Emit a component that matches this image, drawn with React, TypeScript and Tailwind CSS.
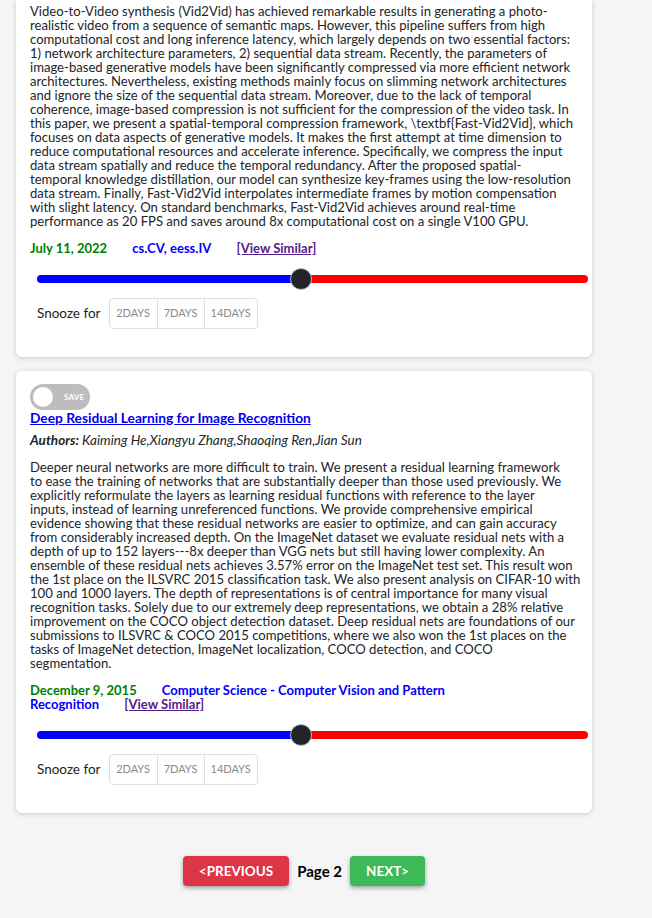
import React from 'react';

// abstracts kept line by line so they wrap the same way as the live page
const papers = [
  {
    id: 1,
    cutOff: true,
    title: '',
    authors: '',
    abstract: [
      'Video-to-Video synthesis (Vid2Vid) has achieved remarkable results in generating a photo-',
      'realistic video from a sequence of semantic maps. However, this pipeline suffers from high',
      'computational cost and long inference latency, which largely depends on two essential factors:',
      '1) network architecture parameters, 2) sequential data stream. Recently, the parameters of',
      'image-based generative models have been significantly compressed via more efficient network',
      'architectures. Nevertheless, existing methods mainly focus on slimming network architectures',
      'and ignore the size of the sequential data stream. Moreover, due to the lack of temporal',
      'coherence, image-based compression is not sufficient for the compression of the video task. In',
      'this paper, we present a spatial-temporal compression framework, \\textbf{Fast-Vid2Vid}, which',
      'focuses on data aspects of generative models. It makes the first attempt at time dimension to',
      'reduce computational resources and accelerate inference. Specifically, we compress the input',
      'data stream spatially and reduce the temporal redundancy. After the proposed spatial-',
      'temporal knowledge distillation, our model can synthesize key-frames using the low-resolution',
      'data stream. Finally, Fast-Vid2Vid interpolates intermediate frames by motion compensation',
      'with slight latency. On standard benchmarks, Fast-Vid2Vid achieves around real-time',
      'performance as 20 FPS and saves around 8x computational cost on a single V100 GPU.',
    ],
    date: 'July 11, 2022',
    category: 'cs.CV, eess.IV',
    score: 48,
  },
  {
    id: 2,
    cutOff: false,
    title: 'Deep Residual Learning for Image Recognition',
    authors: 'Kaiming He,Xiangyu Zhang,Shaoqing Ren,Jian Sun',
    abstract: [
      'Deeper neural networks are more difficult to train. We present a residual learning framework',
      'to ease the training of networks that are substantially deeper than those used previously. We',
      'explicitly reformulate the layers as learning residual functions with reference to the layer',
      'inputs, instead of learning unreferenced functions. We provide comprehensive empirical',
      'evidence showing that these residual networks are easier to optimize, and can gain accuracy',
      'from considerably increased depth. On the ImageNet dataset we evaluate residual nets with a',
      'depth of up to 152 layers---8x deeper than VGG nets but still having lower complexity. An',
      'ensemble of these residual nets achieves 3.57% error on the ImageNet test set. This result won',
      'the 1st place on the ILSVRC 2015 classification task. We also present analysis on CIFAR-10 with',
      '100 and 1000 layers. The depth of representations is of central importance for many visual',
      'recognition tasks. Solely due to our extremely deep representations, we obtain a 28% relative',
      'improvement on the COCO object detection dataset. Deep residual nets are foundations of our',
      'submissions to ILSVRC & COCO 2015 competitions, where we also won the 1st places on the',
      'tasks of ImageNet detection, ImageNet localization, COCO detection, and COCO',
      'segmentation.',
    ],
    date: 'December 9, 2015',
    category: 'Computer Science - Computer Vision and Pattern Recognition',
    score: 48,
  },
];

function SaveToggle() {
  return (
    <div className="flex items-center w-[60px] h-[26px] rounded-full bg-[#bdbdbd] px-[3px]">
      <div className="w-[20px] h-[20px] rounded-full bg-white" />
      <span className="ml-[11px] text-[8px] font-bold text-white tracking-wide">SAVE</span>
    </div>
  );
}

function Slider({ score }: { score: number }) {
  return (
    <div className="relative ml-[7px] w-[551px] h-[22px] flex items-center">
      <div className="flex w-full h-[8px] rounded-full overflow-hidden">
        <div className="h-full bg-[#0000ff]" style={{ width: `${score}%` }}></div>
        <div className="h-full flex-1 bg-[#ff0000]"></div>
      </div>
      <div
        className="absolute top-0 w-[22px] h-[22px] -ml-[11px] rounded-full bg-[#222428] border border-[#9fc4e0]"
        style={{ left: `${score}%` }}
      ></div>
    </div>
  );
}

function Snooze() {
  return (
    <div className="flex items-center ml-[7px] mt-2">
      <span className="text-[13.5px] text-[#212529] mr-2">Snooze for</span>
      <div className="flex h-[31px] border border-[#dedede] rounded text-[11px] text-[#8a8a8a]">
        <button className="px-[6px] w-[47px]">2DAYS</button>
        <button className="px-[6px] w-[47px] border-l border-[#dedede]">7DAYS</button>
        <button className="px-[6px] w-[53px] border-l border-[#dedede]">14DAYS</button>
      </div>
    </div>
  );
}

export default function App() {
  return (
    <div
      className="min-h-screen bg-[#f5f5f5] text-[#212529]"
      style={{ fontFamily: 'Lato, "Liberation Sans", sans-serif' }}
    >
      <div className="w-[576px] ml-4">
        {papers.map((paper) => (
          <div
            key={paper.id}
            className={`bg-white shadow-[0_1px_5px_rgba(0,0,0,0.18)] px-[14px] pb-[28px] mb-[14px] ${
              paper.cutOff ? 'rounded-b-md pt-1' : 'rounded-md pt-[13px]'
            }`}
          >
            {!paper.cutOff && (
              <>
                <SaveToggle />
                <a href="#" className="block mt-[1px] text-[13.75px] leading-[14px] font-bold text-[#0000ee] underline">
                  {paper.title}
                </a>
                <p className="mt-2 text-[13.5px] leading-[14px] italic">
                  <b>Authors:</b> {paper.authors}
                </p>
              </>
            )}
            <p className={`whitespace-nowrap text-[13.1px] leading-[14px] ${paper.cutOff ? '' : 'mt-[13px]'}`}>
              {paper.abstract.map((line, i) => (
                <React.Fragment key={i}>
                  {line}
                  {i < paper.abstract.length - 1 && <br />}
                </React.Fragment>
              ))}
            </p>

            {/* date, category, similar */}
            <p className="mt-[13px] w-4/5 text-[13px] leading-[14px] font-bold">
              <span className="text-[#008000] mr-[22px]">{paper.date}</span>{' '}
              <span className="text-[#0000ff] mr-[22px]">{paper.category}</span>{' '}
              <a href="#" className="text-[#551a8b] underline">[View Similar]</a>
            </p>

            <div className="mt-[13px]">
              <Slider score={paper.score} />
            </div>
            <Snooze />
          </div>
        ))}

        {/* Pagination */}
        <div className="flex items-center justify-center mt-[43px] pb-8">
          <button className="h-[30px] px-4 rounded bg-[#dc3545] text-white text-[13.5px] font-bold shadow-[0_2px_4px_rgba(0,0,0,0.35)]">
            &lt;PREVIOUS
          </button>
          <span className="mx-2 text-[15px] font-bold text-black">Page 2</span>
          <button className="h-[30px] px-4 rounded bg-[#3dba57] text-white text-[13.5px] font-bold shadow-[0_2px_4px_rgba(0,0,0,0.35)]">
            NEXT&gt;
          </button>
        </div>
      </div>
    </div>
  );
}
